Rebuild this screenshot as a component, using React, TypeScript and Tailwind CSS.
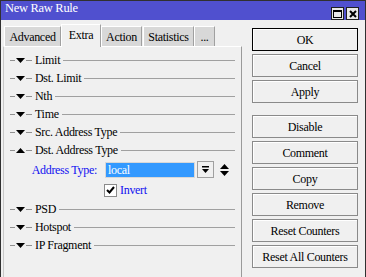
const sections = ['Limit', 'Dst. Limit', 'Nth', 'Time', 'Src. Address Type'];
const afterSections = ['PSD', 'Hotspot', 'IP Fragment'];
const buttons = ['Cancel', 'Apply'];
const lowerButtons = ['Disable', 'Comment', 'Copy', 'Remove', 'Reset Counters', 'Reset All Counters'];

const Arrow = ({ up }: { up?: boolean }) => (
  <svg width="9" height="5" viewBox="0 0 9 5" className="block">
    {up ? <polygon points="0,5 9,5 4.5,0" fill="#000" /> : <polygon points="0,0 9,0 4.5,5" fill="#000" />}
  </svg>
);

const SectionRow = ({ label, open }: { label: string; open?: boolean }) => (
  <div className="flex h-[18px] items-center pl-[6px] pr-[6px]">
    <div className="h-px w-[5px] bg-[#909090]" />
    <div className="ml-px">
      <Arrow up={open} />
    </div>
    <div className="ml-px h-px w-[6px] bg-[#909090]" />
    <span className="ml-[3px] whitespace-nowrap text-black">{label}</span>
    <div className="ml-[3px] h-px flex-1 bg-[#a0a0a0]" />
  </div>
);

const Btn = ({ label, primary }: { label: string; primary?: boolean }) => (
  <div
    className={`flex h-[23px] w-[106px] items-center justify-center border bg-[#f0f0f0] shadow-[inset_1px_1px_0_#ffffff] ${
      primary ? 'border-black' : 'border-[#8a8a8a]'
    }`}
  >
    {label}
  </div>
);

const Tab = ({ label, w, active }: { label: string; w: string; active?: boolean }) => (
  <div
    className={`flex items-center justify-center border-l border-t border-r border-l-white border-t-white border-r-[#a0a0a0] ${w} ${
      active ? 'relative z-10 -mb-px h-[23px] bg-[#f0f0f0] pb-[2px]' : 'h-[20px] bg-[#d8d8d8]'
    }`}
  >
    {label}
  </div>
);

export default function App() {
  return (
    <div className="h-[277px] w-[366px] overflow-hidden border-l border-r border-t border-[#303030] bg-[#f0f0f0] font-['Liberation_Serif'] text-[12px] tracking-[-0.3px] text-black">
      <div className="flex h-[19px] items-end justify-between bg-[#5050cf] pl-[4px] pr-[6px]">
        <span className="mb-[2px] text-[12.5px] text-white">New Raw Rule</span>
        <div className="flex gap-[2px]">
          <div className="flex h-[13px] w-[13px] items-center justify-center border border-[#202020] bg-[#e8e8e8]">
            <div className="h-[8px] w-[9px] border border-t-2 border-black" />
          </div>
          <div className="flex h-[13px] w-[13px] items-center justify-center border border-[#202020] bg-[#e8e8e8]">
            <svg width="8" height="8" viewBox="0 0 8 8">
              <path d="M1 1 L7 7 M7 1 L1 7" stroke="#000" strokeWidth="2" />
            </svg>
          </div>
        </div>
      </div>

      <div className="flex">
        <div className="w-[241px]">
          <div className="mt-[3px] flex h-[23px] items-end pl-[3px]">
            <Tab label="Advanced" w="w-[57px]" />
            <Tab label="Extra" w="w-[40px]" active />
            <Tab label="Action" w="w-[41px]" />
            <div className="w-px" />
            <Tab label="Statistics" w="w-[51px]" />
            <Tab label="..." w="w-[21px]" />
          </div>
          <div className="ml-[2px] h-[240px] w-[239px] border-l border-r border-t border-l-[#c8c8c8] border-r-[#9a9a9a] border-t-white pt-[4px]">
            {sections.map((s) => (
              <SectionRow key={s} label={s} />
            ))}
            <SectionRow label="Dst. Address Type" open />
            <div className="flex h-[21px] items-center">
              <span className="w-[93px] text-right text-[#1010f0]">Address Type:</span>
              <div className="ml-[8px] flex h-[16px] w-[90px] items-center border border-[#d8d8d8] bg-[#3399ff] pl-[2px] text-white">
                local
              </div>
              <div className="ml-[2px] flex h-[17px] w-[17px] items-center justify-center border border-[#a0a0a0] bg-[#f0f0f0]">
                <svg width="9" height="9" viewBox="0 0 9 9">
                  <rect x="1" y="1" width="7" height="1.5" fill="#000" />
                  <polygon points="1,4 8,4 4.5,8" fill="#000" />
                </svg>
              </div>
              <div className="ml-[6px] flex flex-col gap-[2px]">
                <Arrow up />
                <Arrow />
              </div>
            </div>
            <div className="flex h-[20px] items-center pl-[100px]">
              <div className="flex h-[13px] w-[13px] items-center justify-center border border-[#8a8a8a] bg-white">
                <svg width="9" height="8" viewBox="0 0 9 8">
                  <path d="M1 4 L3.5 6.5 L8 1" stroke="#000" strokeWidth="2" fill="none" />
                </svg>
              </div>
              <span className="ml-[3px] text-[#1010f0]">Invert</span>
            </div>
            {afterSections.map((s) => (
              <SectionRow key={s} label={s} />
            ))}
          </div>
        </div>

        <div className="ml-[10px] mt-[8px] flex flex-col gap-[3px]">
          <Btn label="OK" primary />
          {buttons.map((b) => (
            <Btn key={b} label={b} />
          ))}
          <div className="h-[6px]" />
          {lowerButtons.map((b) => (
            <Btn key={b} label={b} />
          ))}
        </div>
      </div>
    </div>
  );
}
